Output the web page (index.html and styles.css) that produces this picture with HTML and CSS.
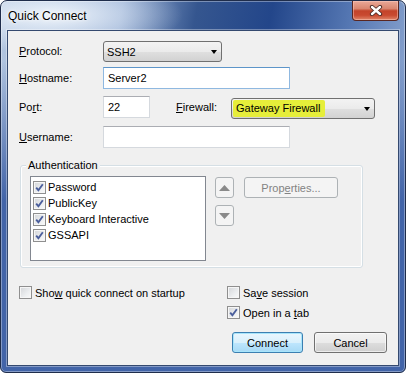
FILE: index.html
```html
<!DOCTYPE html>
<html lang="en">
<head>
    <meta charset="UTF-8">
    <title>Quick Connect</title>
    <link rel="stylesheet" href="styles.css">
</head>
<body>
    <div class="window">
        <div class="titlebar">
            <span class="title">Quick Connect</span>
            <div class="close">
                <svg width="14" height="11" viewBox="0 0 14 11">
                    <path d="M3 2 L11 9 M11 2 L3 9" stroke="#4a2a26" stroke-width="4.2" stroke-linecap="round"/>
                    <path d="M3 2 L11 9 M11 2 L3 9" stroke="#ffffff" stroke-width="2.4" stroke-linecap="round"/>
                </svg>
            </div>
        </div>
        <div class="client">
            <div class="row r1">
                <label class="lbl"><u>P</u>rotocol:</label>
                <div class="combo protocol"><span>SSH2</span><i class="arrow"></i></div>
            </div>
            <div class="row r2">
                <label class="lbl"><u>H</u>ostname:</label>
                <div class="edit host focus">Server2</div>
            </div>
            <div class="row r3">
                <label class="lbl">Po<u>r</u>t:</label>
                <div class="edit port">22</div>
                <label class="lbl fw"><u>F</u>irewall:</label>
                <div class="combo firewall"><span class="mark">Gateway Firewall</span><i class="arrow"></i></div>
            </div>
            <div class="row r4">
                <label class="lbl"><u>U</u>sername:</label>
                <div class="edit user"></div>
            </div>

            <div class="group">
                <span class="legend">Authentication</span>
                <div class="group-body">
                    <div class="list">
                        <div class="item"><span class="cb on"></span><span>Password</span></div>
                        <div class="item"><span class="cb on"></span><span>PublicKey</span></div>
                        <div class="item"><span class="cb on"></span><span>Keyboard Interactive</span></div>
                        <div class="item"><span class="cb on"></span><span>GSSAPI</span></div>
                    </div>
                    <div class="movers">
                        <div class="btn off mover">
                            <svg width="11" height="6" viewBox="0 0 11 6"><polygon points="0,6 11,6 5.5,0" fill="#8a8a8a"/></svg>
                        </div>
                        <div class="btn off mover">
                            <svg width="11" height="6" viewBox="0 0 11 6"><polygon points="0,0 11,0 5.5,6" fill="#8a8a8a"/></svg>
                        </div>
                    </div>
                    <div class="btn off props"><span>Prop<u>e</u>rties...</span></div>
                </div>
            </div>

            <div class="options">
                <div class="check"><span class="cb"></span><span>Sho<u>w</u> quick connect on startup</span></div>
                <div class="check"><span class="cb"></span><span>Sa<u>v</u>e session</span></div>
                <div class="check col2 second"><span class="cb on"></span><span>Open in a <u>t</u>ab</span></div>
                <div class="buttons col2">
                    <div class="btn default connect">Connect</div>
                    <div class="btn cancel">Cancel</div>
                </div>
            </div>
        </div>
    </div>
</body>
</html>
```

FILE: styles.css
```css
body {
    margin: 0;
    padding: 0;
    background-color: #ffffff;
    font-family: 'Liberation Sans', Arial, sans-serif;
    font-size: 11px;
    color: #000;
}
u {
    text-underline-offset: 1px;
}
.window {
    width: 406px;
    height: 373px;
    box-sizing: border-box;
    border: 1px solid #1f2d4b;
    border-radius: 7px 7px 6px 6px;
    padding: 0 6px 6px 6px;
    box-shadow: inset 0 0 0 1px rgba(255,255,255,0.35);
    background:
        radial-gradient(ellipse 130px 38px at 52px 14px, rgba(240,246,252,0.97), rgba(240,246,252,0) 100%),
        linear-gradient(to bottom, rgba(66,100,168,0) 0, rgba(66,100,168,0) 60px, rgba(66,100,168,1) 200px),
        linear-gradient(100deg, #b3c6e0 0%, #93acd3 26%, #35568f 42%, #23468a 58%, #587ab5 76%, #8aa4cf 90%, #7d99c9 100%);
}
.titlebar {
    height: 29px;
    display: flex;
    align-items: center;
    padding-left: 1px;
}
.title {
    flex-grow: 1;
    font-size: 12px;
    color: #000;
    text-shadow: 0 0 6px #fff, 0 0 3px #fff;
}
.close {
    align-self: flex-start;
    width: 45px;
    height: 19px;
    border: 1px solid #5a2620;
    border-top: none;
    border-radius: 0 0 4px 4px;
    display: flex;
    align-items: center;
    justify-content: center;
    background: linear-gradient(#e9a898 0%, #d98670 40%, #c3432a 52%, #c94a30 75%, #e0866a 100%);
    box-shadow: inset 0 0 0 1px rgba(255,210,200,0.45);
}
.client {
    height: 336px;
    box-sizing: border-box;
    border: 1px solid #34496f;
    background-color: #f0f0f0;
    box-shadow: 0 0 0 1px rgba(255,255,255,0.35);
    padding-left: 11px;
    padding-top: 10px;
}
.row {
    display: flex;
    align-items: center;
}
.r2 { margin-top: 5px; }
.r3 { margin-top: 7px; align-items: flex-start; }
.r4 { margin-top: 7px; }
.lbl {
    width: 84px;
    line-height: 13px;
}
.r3 .lbl { margin-top: 5px; }
.fw {
    width: 55px;
    margin-left: 26px;
}
.combo {
    height: 21px;
    box-sizing: border-box;
    border: 1px solid #707070;
    border-radius: 3px;
    background: linear-gradient(#f3f3f3 0%, #ebebeb 50%, #dfdfdf 52%, #d2d2d2 100%);
    display: flex;
    align-items: center;
    padding-left: 3px;
    padding-right: 3px;
}
.combo span {
    flex-grow: 1;
}
.protocol { width: 119px; }
.firewall {
    width: 144px;
    margin-top: 2px;
    padding-left: 0;
}
.mark {
    flex-grow: 0 !important;
    background-color: #e6ee3a;
    padding: 2px 5px 2px 3px;
    margin-left: 1px;
    line-height: 13px;
    border-radius: 2px;
}
.firewall .arrow { margin-left: auto; }
.arrow {
    width: 0;
    height: 0;
    border-left: 3.5px solid transparent;
    border-right: 3.5px solid transparent;
    border-top: 4px solid #000;
    margin-right: 1px;
}
.edit {
    height: 22px;
    box-sizing: border-box;
    border: 1px solid #d5d9de;
    border-top-color: #abadb3;
    background-color: #fff;
    padding-left: 4px;
    display: flex;
    align-items: center;
}
.edit.focus {
    border-color: #8fb8e0;
    border-top-color: #5d95c9;
}
.host, .user { width: 187px; }
.port { width: 47px; }

.group {
    margin-top: 17px;
    margin-left: 1px;
    width: 343px;
    height: 103px;
    box-sizing: border-box;
    border: 1px solid #d5dfe5;
    border-radius: 3px;
    box-shadow: inset 0 0 0 1px #fff;
}
.legend {
    display: block;
    width: fit-content;
    margin: -7px 0 0 5px;
    padding: 0 2px;
    line-height: 13px;
    background-color: #f0f0f0;
}
.group-body {
    display: flex;
    align-items: flex-start;
    padding-left: 9px;
    margin-top: 4px;
}
.list {
    width: 176px;
    height: 85px;
    box-sizing: border-box;
    border: 1px solid #828790;
    background-color: #fff;
    padding: 2px 0 0 2px;
}
.item {
    height: 16px;
    display: flex;
    align-items: center;
}
.cb {
    width: 13px;
    height: 13px;
    box-sizing: border-box;
    border: 1px solid #8f8f8f;
    margin-right: 2px;
    flex-shrink: 0;
    background: linear-gradient(135deg, #d3d5d8 0%, #eceef0 60%, #fafafa 100%);
    box-shadow: inset 0 0 0 1px #f6f6f6;
}
.cb.on {
    background:
        url("data:image/svg+xml,%3Csvg xmlns='http://www.w3.org/2000/svg' width='11' height='11' viewBox='0 0 11 11'%3E%3Cpath d='M2.2 5.6 L4.4 8.2 L8.8 2.2' fill='none' stroke='%234a5e9c' stroke-width='1.9'/%3E%3C/svg%3E") center / 11px 11px no-repeat,
        linear-gradient(135deg, #d3d5d8 0%, #eceef0 60%, #fafafa 100%);
}
.movers {
    margin-left: 9px;
    margin-top: 1px;
    display: flex;
    flex-direction: column;
    gap: 7px;
}
.btn {
    height: 21px;
    box-sizing: border-box;
    border: 1px solid #707070;
    border-radius: 3px;
    display: flex;
    align-items: center;
    justify-content: center;
    background: linear-gradient(#f2f2f2 0%, #ebebeb 50%, #dddddd 52%, #cfcfcf 100%);
    box-shadow: inset 0 0 0 1px rgba(255,255,255,0.6);
}
.btn.off {
    border-color: #adb2b5;
    background: #f4f4f4;
    color: #838383;
    box-shadow: none;
}
.mover { width: 19px; }
.props {
    width: 94px;
    margin-left: 10px;
    margin-top: 1px;
}

.options {
    margin-top: 18px;
    display: grid;
    grid-template-columns: 208px auto;
}
.check {
    height: 13px;
    display: flex;
    align-items: center;
}
.check .cb { margin-right: 3px; }
.col2 { grid-column: 2; }
.second { margin-top: 7px; }
.buttons {
    margin-top: 13px;
    padding-left: 5px;
    display: flex;
    gap: 11px;
}
.connect {
    width: 71px;
    border-color: #3c7fb1;
    background: linear-gradient(#eaf6fd 0%, #d9f0fc 50%, #bee6fd 52%, #a7d9f5 100%);
    box-shadow: inset 0 0 0 1px #a8e5fb;
}
.cancel { width: 73px; }
```
